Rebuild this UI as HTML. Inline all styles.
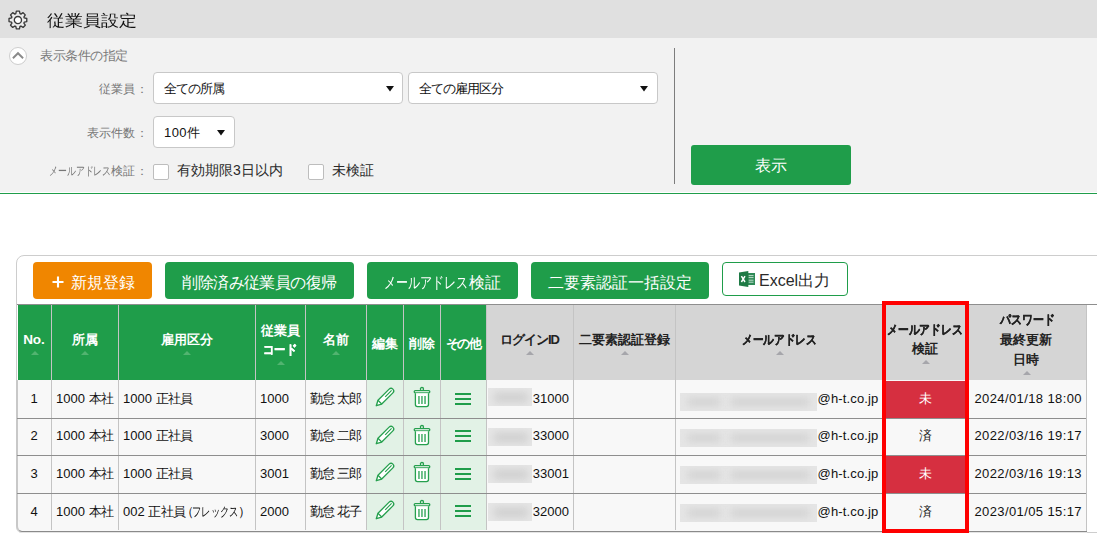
<!DOCTYPE html><html><head><meta charset="utf-8"><style>
*{box-sizing:border-box;margin:0;padding:0}
html,body{width:1097px;height:543px;overflow:hidden;background:#fff}
body{position:relative;font-family:"Liberation Sans",sans-serif;color:#222}
.a{position:absolute}
.t{position:absolute;white-space:nowrap;line-height:1}
</style></head><body>
<div class="a" style="left:0;top:0;width:1097px;height:38px;background:#e0e0e0"></div>
<svg class="a" style="left:8px;top:10px" width="20" height="20" viewBox="0 0 20 20"><path fill="#ebebeb" stroke="#3a3a3a" stroke-width="1.35" stroke-linejoin="round" d="M7.80 3.69 L8.35 1.18 L11.45 1.18 L12.00 3.69 L12.91 4.07 L15.07 2.69 L17.26 4.88 L15.88 7.04 L16.26 7.95 L18.77 8.50 L18.77 11.60 L16.26 12.15 L15.88 13.06 L17.26 15.22 L15.07 17.41 L12.91 16.03 L12.00 16.41 L11.45 18.92 L8.35 18.92 L7.80 16.41 L6.89 16.03 L4.73 17.41 L2.54 15.22 L3.92 13.06 L3.54 12.15 L1.03 11.60 L1.03 8.50 L3.54 7.95 L3.92 7.04 L2.54 4.88 L4.73 2.69 L6.89 4.07Z"/><circle cx="9.9" cy="10.05" r="3.6" fill="#fff" stroke="#3a3a3a" stroke-width="1.35"/></svg>
<div class="t" style="left:47px;top:11px;font-size:18px;color:#111;transform:scaleY(0.89);transform-origin:0 17px">従業員設定</div>
<div class="a" style="left:0;top:38px;width:1097px;height:154px;background:#f2f2f2"></div>
<div class="a" style="left:0;top:193px;width:1097px;height:1px;background:#1f9d4a"></div>
<svg class="a" style="left:9px;top:47px" width="18" height="18" viewBox="0 0 18 18"><circle cx="9" cy="9" r="8.5" fill="#fff" stroke="#cdcdcd"/><path d="M3.9 11.2L9 6.2l5.1 5" fill="none" stroke="#8a8a8a" stroke-width="1.9"/></svg>
<div class="t" style="left:40px;top:48.5px;font-size:13px;color:#7a7a7a;letter-spacing:-0.5px">表示条件の指定</div>
<div class="t" style="left:99px;top:83px;font-size:12px;color:#777">従業員<span style="margin-left:1px">：</span></div>
<div class="t" style="left:87px;top:127px;font-size:12px;color:#777">表示件数<span style="margin-left:1px">：</span></div>
<div class="t" style="left:48.5px;top:164.5px;font-size:12px;color:#777"><span style="display:inline-block;width:62.16px;margin-left:0px"><span style="display:inline-block;transform:scaleX(0.74);transform-origin:0 0;-webkit-text-stroke:0px currentColor">メールアドレス</span></span>検証<span style="margin-left:1px">：</span></div>
<div class="a" style="left:153px;top:72px;width:250px;height:32px;background:#fff;border:1px solid #c8c8c8;border-radius:4px"></div><div class="t" style="left:164px;top:82px;font-size:13px;color:#111;letter-spacing:-1px">全ての所属</div><svg class="a" style="left:385.5px;top:86px" width="8" height="6" viewBox="0 0 8 6"><path d="M0 0h8L4 5.5z" fill="#111"/></svg>
<div class="a" style="left:408px;top:72px;width:250px;height:32px;background:#fff;border:1px solid #c8c8c8;border-radius:4px"></div><div class="t" style="left:419px;top:82px;font-size:13px;color:#111;letter-spacing:-1px">全ての雇用区分</div><svg class="a" style="left:639.5px;top:86px" width="8" height="6" viewBox="0 0 8 6"><path d="M0 0h8L4 5.5z" fill="#111"/></svg>
<div class="a" style="left:153px;top:116px;width:82px;height:32px;background:#fff;border:1px solid #c8c8c8;border-radius:4px"></div><div class="t" style="left:164px;top:126px;font-size:13px;color:#111;letter-spacing:0.4px">100件</div><svg class="a" style="left:216.5px;top:130px" width="8" height="6" viewBox="0 0 8 6"><path d="M0 0h8L4 5.5z" fill="#111"/></svg>
<div class="a" style="left:153px;top:164px;width:16px;height:16px;background:#fff;border:1px solid #bdbdbd;border-radius:2px"></div>
<div class="t" style="left:177px;top:162.5px;font-size:14px;color:#2a2a2a">有効期限3日以内</div>
<div class="a" style="left:308px;top:164px;width:16px;height:16px;background:#fff;border:1px solid #bdbdbd;border-radius:2px"></div>
<div class="t" style="left:332px;top:162.5px;font-size:14px;color:#2a2a2a">未検証</div>
<div class="a" style="left:674px;top:48px;width:1px;height:136px;background:#7d7d7d"></div>
<div class="a" style="left:691px;top:145px;width:160px;height:40px;background:#1f9d4a;border-radius:3px"></div>
<div class="t" style="left:691px;top:158px;width:160px;text-align:center;font-size:16px;color:#fff">表示</div>
<div class="a" style="left:16px;top:255px;width:1100px;height:278px;border:1px solid #cdcdcd;border-radius:8px 8px 6px 6px;background:#fff"></div>
<div class="a" style="left:33px;top:262px;width:119px;height:37px;background:#f08600;border-radius:4px"></div>
<svg class="a" style="left:52px;top:276px" width="12" height="12" viewBox="0 0 12 12"><path d="M6 0.5v11M0.5 6h11" stroke="#fff" stroke-width="2.1"/></svg>
<div class="t" style="left:71px;top:275px;font-size:16px;color:#fff">新規登録</div>
<div class="a" style="left:165px;top:262px;width:189px;height:37px;background:#1f9d4a;border-radius:4px"></div><div class="t" style="left:165px;top:274.5px;width:189px;text-align:center;font-size:16px;color:#fff;letter-spacing:-0.6px">削除済み従業員の復帰</div>
<div class="a" style="left:367px;top:262px;width:151px;height:37px;background:#1f9d4a;border-radius:4px"></div><div class="t" style="left:367px;top:274.5px;width:151px;text-align:center;font-size:16px;color:#fff;letter-spacing:0px"><span style="display:inline-block;width:85.00px;margin-left:0px"><span style="display:inline-block;transform:scaleX(0.75);transform-origin:0 0;-webkit-text-stroke:0px currentColor">メールアドレス</span></span>検証</div>
<div class="a" style="left:531px;top:262px;width:178px;height:37px;background:#1f9d4a;border-radius:4px"></div><div class="t" style="left:531px;top:274.5px;width:178px;text-align:center;font-size:16px;color:#fff;letter-spacing:0px">二要素認証一括設定</div>
<div class="a" style="left:722px;top:262px;width:126px;height:34px;background:#fff;border:1px solid #1f9d4a;border-radius:4px"></div>
<svg class="a" style="left:738px;top:270px" width="18" height="18" viewBox="0 0 18 18"><rect x="9.5" y="3" width="7.5" height="12" fill="#2f8a57"/><path d="M10.5 5.6h5M10.5 7.6h5M10.5 10.2h5M10.5 12.2h5" stroke="#cfe6d8" stroke-width="0.9"/><path d="M1 2.6L10.3 1v16L1 15.4z" fill="#1e7a45"/><path d="M3.4 6.2l3.6 5.8M7 6.2l-3.6 5.8" stroke="#fff" stroke-width="1.5"/></svg>
<div class="t" style="left:759px;top:272.5px;font-size:16px;color:#2a2a2a">Excel出力</div>
<div class="a" style="left:17px;top:304px;width:1080px;height:1px;background:#8e8e8e"></div>
<div class="a" style="left:18px;top:305px;width:468px;height:75px;background:#1f9d4a"></div>
<div class="a" style="left:486px;top:305px;width:600px;height:75px;background:#d5d5d5"></div>
<div class="a" style="left:16px;top:380px;width:1071px;height:152px;background:#f8f8f8;border-left:2px solid #c8c8c8;border-bottom:1px solid #8a8a8a;border-bottom-left-radius:6px;box-shadow:0 1px 0 #e4e4e4"></div>
<div class="a" style="left:366px;top:380px;width:120px;height:150px;background:#e2f2e6"></div>
<div class="a" style="left:884px;top:381px;width:82px;height:37px;background:#d62f40"></div>
<div class="a" style="left:884px;top:456px;width:82px;height:37px;background:#d62f40"></div>
<div class="a" style="left:51px;top:305px;width:1px;height:225px;background:#c4c4c4"></div>
<div class="a" style="left:118px;top:305px;width:1px;height:225px;background:#c4c4c4"></div>
<div class="a" style="left:255px;top:305px;width:1px;height:225px;background:#c4c4c4"></div>
<div class="a" style="left:305px;top:305px;width:1px;height:225px;background:#c4c4c4"></div>
<div class="a" style="left:366px;top:305px;width:1px;height:225px;background:#c4c4c4"></div>
<div class="a" style="left:403px;top:305px;width:1px;height:225px;background:#c4c4c4"></div>
<div class="a" style="left:440px;top:305px;width:1px;height:225px;background:#c4c4c4"></div>
<div class="a" style="left:486px;top:305px;width:1px;height:225px;background:#c4c4c4"></div>
<div class="a" style="left:573px;top:305px;width:1px;height:225px;background:#c4c4c4"></div>
<div class="a" style="left:675px;top:305px;width:1px;height:225px;background:#c4c4c4"></div>
<div class="a" style="left:884px;top:305px;width:1px;height:225px;background:#c4c4c4"></div>
<div class="a" style="left:966px;top:305px;width:1px;height:225px;background:#c4c4c4"></div>
<div class="a" style="left:1086px;top:305px;width:1px;height:226px;background:#c4c4c4"></div>
<div class="a" style="left:17px;top:418px;width:1069px;height:1px;background:#8e8e8e"></div>
<div class="a" style="left:17px;top:455px;width:1069px;height:1px;background:#8e8e8e"></div>
<div class="a" style="left:17px;top:493px;width:1069px;height:1px;background:#8e8e8e"></div>
<div class="t" style="left:17px;width:34px;top:333.2px;text-align:center;font-size:13.5px;font-weight:bold;color:#fff;letter-spacing:0px">No.</div><svg class="a" style="left:30.5px;top:350.8px" width="8" height="4" viewBox="0 0 8 4"><path d="M0 4L4 0 8 4z" fill="#52b470"/></svg>
<div class="t" style="left:51px;width:67px;top:333.2px;text-align:center;font-size:13px;font-weight:bold;color:#fff;letter-spacing:0px">所属</div><svg class="a" style="left:81.0px;top:350.8px" width="8" height="4" viewBox="0 0 8 4"><path d="M0 4L4 0 8 4z" fill="#52b470"/></svg>
<div class="t" style="left:118px;width:137px;top:333.2px;text-align:center;font-size:13px;font-weight:bold;color:#fff;letter-spacing:0px">雇用区分</div><svg class="a" style="left:183.0px;top:350.8px" width="8" height="4" viewBox="0 0 8 4"><path d="M0 4L4 0 8 4z" fill="#52b470"/></svg>
<div class="t" style="left:255px;width:50px;top:323.5px;text-align:center;font-size:13px;font-weight:bold;color:#fff;letter-spacing:0px">従業員</div><div class="t" style="left:255px;width:50px;top:343.0px;text-align:center;font-size:13px;font-weight:bold;color:#fff;letter-spacing:0px"><span style="display:inline-block;width:33.93px;margin-left:0px"><span style="display:inline-block;transform:scaleX(0.87);transform-origin:0 0;-webkit-text-stroke:0.35px currentColor">コード</span></span></div><svg class="a" style="left:276.5px;top:360.5px" width="8" height="4" viewBox="0 0 8 4"><path d="M0 4L4 0 8 4z" fill="#52b470"/></svg>
<div class="t" style="left:305px;width:61px;top:333.2px;text-align:center;font-size:13px;font-weight:bold;color:#fff;letter-spacing:0px">名前</div><svg class="a" style="left:332.0px;top:350.8px" width="8" height="4" viewBox="0 0 8 4"><path d="M0 4L4 0 8 4z" fill="#52b470"/></svg>
<div class="t" style="left:366px;width:37px;top:337.2px;text-align:center;font-size:13px;font-weight:bold;color:#fff;letter-spacing:0px">編集</div>
<div class="t" style="left:403px;width:37px;top:337.2px;text-align:center;font-size:13px;font-weight:bold;color:#fff;letter-spacing:0px">削除</div>
<div class="t" style="left:440px;width:46px;top:337.2px;text-align:center;font-size:13px;font-weight:bold;color:#fff;letter-spacing:-1.6px">その他</div>
<div class="t" style="left:486px;width:87px;top:333.2px;text-align:center;font-size:13px;font-weight:bold;color:#222;letter-spacing:-1px">ログインID</div><svg class="a" style="left:526.0px;top:350.8px" width="8" height="4" viewBox="0 0 8 4"><path d="M0 4L4 0 8 4z" fill="#a6a6ab"/></svg>
<div class="t" style="left:573px;width:102px;top:333.2px;text-align:center;font-size:13px;font-weight:bold;color:#222;letter-spacing:0px">二要素認証登録</div><svg class="a" style="left:620.5px;top:350.8px" width="8" height="4" viewBox="0 0 8 4"><path d="M0 4L4 0 8 4z" fill="#a6a6ab"/></svg>
<div class="t" style="left:675px;width:209px;top:333.2px;text-align:center;font-size:13px;font-weight:bold;color:#222;letter-spacing:0px"><span style="display:inline-block;width:74.62px;margin-left:0px"><span style="display:inline-block;transform:scaleX(0.82);transform-origin:0 0;-webkit-text-stroke:0.35px currentColor">メールアドレス</span></span></div><svg class="a" style="left:776.0px;top:350.8px" width="8" height="4" viewBox="0 0 8 4"><path d="M0 4L4 0 8 4z" fill="#a6a6ab"/></svg>
<div class="t" style="left:884px;width:82px;top:322.5px;text-align:center;font-size:13px;font-weight:bold;color:#222;letter-spacing:0px"><span style="display:inline-block;width:75.53px;margin-left:0px"><span style="display:inline-block;transform:scaleX(0.83);transform-origin:0 0;-webkit-text-stroke:0.35px currentColor">メールアドレス</span></span></div><div class="t" style="left:884px;width:82px;top:342.0px;text-align:center;font-size:13px;font-weight:bold;color:#222;letter-spacing:0px">検証</div><svg class="a" style="left:921.5px;top:359.5px" width="8" height="4" viewBox="0 0 8 4"><path d="M0 4L4 0 8 4z" fill="#a6a6ab"/></svg>
<div class="t" style="left:966px;width:120px;top:313.0px;text-align:center;font-size:13px;font-weight:bold;color:#222;letter-spacing:0px"><span style="display:inline-block;width:54.60px;margin-left:3px"><span style="display:inline-block;transform:scaleX(0.84);transform-origin:0 0;-webkit-text-stroke:0.35px currentColor">パスワード</span></span></div><div class="t" style="left:966px;width:120px;top:333.0px;text-align:center;font-size:13px;font-weight:bold;color:#222;letter-spacing:0px">最終更新</div><div class="t" style="left:966px;width:120px;top:353.0px;text-align:center;font-size:13px;font-weight:bold;color:#222;letter-spacing:0px">日時</div><svg class="a" style="left:1022.5px;top:371.0px" width="8" height="4" viewBox="0 0 8 4"><path d="M0 4L4 0 8 4z" fill="#a6a6ab"/></svg>
<div class="t" style="left:17px;width:34px;top:391.7px;text-align:center;font-size:13px;color:#111;letter-spacing:0px">1</div>
<div class="t" style="left:56px;top:391.7px;font-size:13px;color:#111;letter-spacing:0px">1000 <span style="letter-spacing:-0.4px">本社</span></div>
<div class="t" style="left:123px;top:391.7px;font-size:13px;color:#111;letter-spacing:0px">1000 <span style="letter-spacing:-0.6px">正社員</span></div>
<div class="t" style="left:260px;top:391.7px;font-size:13px;color:#111;letter-spacing:0px">1000</div>
<div class="t" style="left:310px;top:391.7px;font-size:13px;color:#111;letter-spacing:-0.8px">勤怠 太郎</div>
<svg class="a" style="left:372px;top:384px" width="26" height="26" viewBox="0 0 26 26"><path d="M5.98 16.28L17.13 5.13A2.65 2.65 0 0 1 20.88 8.88L9.73 20.03L4.3 21.7Z" fill="#fff" stroke="#26a04e" stroke-width="1.35" stroke-linejoin="round"/><path d="M5.98 16.28L9.73 20.03M13.2 12.8L19.6 6.4" fill="none" stroke="#26a04e" stroke-width="1.2"/></svg>
<svg class="a" style="left:409px;top:384px" width="26" height="26" viewBox="0 0 26 26"><circle cx="12.95" cy="5.05" r="1.55" fill="#fff" stroke="#26a04e" stroke-width="1.3"/><rect x="5.2" y="6.65" width="15.6" height="2.3" rx="1.1" fill="#fff" stroke="#26a04e" stroke-width="1.3"/><path d="M6.4 9.3V20.6a2.1 2.1 0 0 0 2.1 2.1h8.9a2.1 2.1 0 0 0 2.1-2.1V9.3" fill="#fff" stroke="#26a04e" stroke-width="1.3"/><path d="M9.95 12v7.9M12.95 12v7.9M16.05 12v7.9" stroke="#62bb80" stroke-width="1.8"/></svg>
<svg class="a" style="left:455px;top:392px" width="16" height="14" viewBox="0 0 16 14"><path d="M0 2h16M0 7h16M0 12h16" stroke="#1f9d4a" stroke-width="2"/></svg>
<div class="a" style="left:488px;top:388px;width:44px;height:18px;background:#e6e6e6;overflow:hidden"><div class="a" style="left:6px;top:5px;width:34px;height:9px;background:#cdcdcd;filter:blur(4px)"></div></div>
<div class="t" style="right:528px;top:391.7px;text-align:right;font-size:13px;color:#111;letter-spacing:0px">31000</div>
<div class="a" style="left:680px;top:393px;width:137px;height:18px;background:#e5e5e5;overflow:hidden"><div class="a" style="left:8px;top:5px;width:32px;height:8px;background:#d3d3d3;filter:blur(3.5px)"></div><div class="a" style="left:51px;top:5px;width:78px;height:8px;background:#d3d3d3;filter:blur(3.5px)"></div></div>
<div class="t" style="right:218.5px;top:391.7px;text-align:right;font-size:13px;color:#111;letter-spacing:0.15px">@h-t.co.jp</div>
<div class="t" style="left:884px;width:82px;top:391.7px;text-align:center;font-size:13px;color:#fff;letter-spacing:0px">未</div>
<div class="t" style="right:15px;top:391.7px;text-align:right;font-size:13px;color:#111;letter-spacing:0.4px">2024/01/18 18:00</div>
<div class="t" style="left:17px;width:34px;top:429.2px;text-align:center;font-size:13px;color:#111;letter-spacing:0px">2</div>
<div class="t" style="left:56px;top:429.2px;font-size:13px;color:#111;letter-spacing:0px">1000 <span style="letter-spacing:-0.4px">本社</span></div>
<div class="t" style="left:123px;top:429.2px;font-size:13px;color:#111;letter-spacing:0px">1000 <span style="letter-spacing:-0.6px">正社員</span></div>
<div class="t" style="left:260px;top:429.2px;font-size:13px;color:#111;letter-spacing:0px">3000</div>
<div class="t" style="left:310px;top:429.2px;font-size:13px;color:#111;letter-spacing:-0.8px">勤怠 二郎</div>
<svg class="a" style="left:372px;top:422px" width="26" height="26" viewBox="0 0 26 26"><path d="M5.98 16.28L17.13 5.13A2.65 2.65 0 0 1 20.88 8.88L9.73 20.03L4.3 21.7Z" fill="#fff" stroke="#26a04e" stroke-width="1.35" stroke-linejoin="round"/><path d="M5.98 16.28L9.73 20.03M13.2 12.8L19.6 6.4" fill="none" stroke="#26a04e" stroke-width="1.2"/></svg>
<svg class="a" style="left:409px;top:422px" width="26" height="26" viewBox="0 0 26 26"><circle cx="12.95" cy="5.05" r="1.55" fill="#fff" stroke="#26a04e" stroke-width="1.3"/><rect x="5.2" y="6.65" width="15.6" height="2.3" rx="1.1" fill="#fff" stroke="#26a04e" stroke-width="1.3"/><path d="M6.4 9.3V20.6a2.1 2.1 0 0 0 2.1 2.1h8.9a2.1 2.1 0 0 0 2.1-2.1V9.3" fill="#fff" stroke="#26a04e" stroke-width="1.3"/><path d="M9.95 12v7.9M12.95 12v7.9M16.05 12v7.9" stroke="#62bb80" stroke-width="1.8"/></svg>
<svg class="a" style="left:455px;top:429px" width="16" height="14" viewBox="0 0 16 14"><path d="M0 2h16M0 7h16M0 12h16" stroke="#1f9d4a" stroke-width="2"/></svg>
<div class="a" style="left:488px;top:428px;width:44px;height:18px;background:#e6e6e6;overflow:hidden"><div class="a" style="left:6px;top:5px;width:34px;height:9px;background:#cdcdcd;filter:blur(4px)"></div></div>
<div class="t" style="right:528px;top:429.2px;text-align:right;font-size:13px;color:#111;letter-spacing:0px">33000</div>
<div class="a" style="left:680px;top:429px;width:137px;height:18px;background:#e5e5e5;overflow:hidden"><div class="a" style="left:8px;top:5px;width:32px;height:8px;background:#d3d3d3;filter:blur(3.5px)"></div><div class="a" style="left:51px;top:5px;width:78px;height:8px;background:#d3d3d3;filter:blur(3.5px)"></div></div>
<div class="t" style="right:218.5px;top:429.2px;text-align:right;font-size:13px;color:#111;letter-spacing:0.15px">@h-t.co.jp</div>
<div class="t" style="left:884px;width:82px;top:429.2px;text-align:center;font-size:13px;color:#222;letter-spacing:0px">済</div>
<div class="t" style="right:15px;top:429.2px;text-align:right;font-size:13px;color:#111;letter-spacing:0.4px">2022/03/16 19:17</div>
<div class="t" style="left:17px;width:34px;top:467.4px;text-align:center;font-size:13px;color:#111;letter-spacing:0px">3</div>
<div class="t" style="left:56px;top:467.4px;font-size:13px;color:#111;letter-spacing:0px">1000 <span style="letter-spacing:-0.4px">本社</span></div>
<div class="t" style="left:123px;top:467.4px;font-size:13px;color:#111;letter-spacing:0px">1000 <span style="letter-spacing:-0.6px">正社員</span></div>
<div class="t" style="left:260px;top:467.4px;font-size:13px;color:#111;letter-spacing:0px">3001</div>
<div class="t" style="left:310px;top:467.4px;font-size:13px;color:#111;letter-spacing:-0.8px">勤怠 三郎</div>
<svg class="a" style="left:372px;top:459px" width="26" height="26" viewBox="0 0 26 26"><path d="M5.98 16.28L17.13 5.13A2.65 2.65 0 0 1 20.88 8.88L9.73 20.03L4.3 21.7Z" fill="#fff" stroke="#26a04e" stroke-width="1.35" stroke-linejoin="round"/><path d="M5.98 16.28L9.73 20.03M13.2 12.8L19.6 6.4" fill="none" stroke="#26a04e" stroke-width="1.2"/></svg>
<svg class="a" style="left:409px;top:459px" width="26" height="26" viewBox="0 0 26 26"><circle cx="12.95" cy="5.05" r="1.55" fill="#fff" stroke="#26a04e" stroke-width="1.3"/><rect x="5.2" y="6.65" width="15.6" height="2.3" rx="1.1" fill="#fff" stroke="#26a04e" stroke-width="1.3"/><path d="M6.4 9.3V20.6a2.1 2.1 0 0 0 2.1 2.1h8.9a2.1 2.1 0 0 0 2.1-2.1V9.3" fill="#fff" stroke="#26a04e" stroke-width="1.3"/><path d="M9.95 12v7.9M12.95 12v7.9M16.05 12v7.9" stroke="#62bb80" stroke-width="1.8"/></svg>
<svg class="a" style="left:455px;top:467px" width="16" height="14" viewBox="0 0 16 14"><path d="M0 2h16M0 7h16M0 12h16" stroke="#1f9d4a" stroke-width="2"/></svg>
<div class="a" style="left:488px;top:465px;width:44px;height:18px;background:#e6e6e6;overflow:hidden"><div class="a" style="left:6px;top:5px;width:34px;height:9px;background:#cdcdcd;filter:blur(4px)"></div></div>
<div class="t" style="right:528px;top:467.4px;text-align:right;font-size:13px;color:#111;letter-spacing:0px">33001</div>
<div class="a" style="left:680px;top:465.5px;width:137px;height:18px;background:#e5e5e5;overflow:hidden"><div class="a" style="left:8px;top:5px;width:32px;height:8px;background:#d3d3d3;filter:blur(3.5px)"></div><div class="a" style="left:51px;top:5px;width:78px;height:8px;background:#d3d3d3;filter:blur(3.5px)"></div></div>
<div class="t" style="right:218.5px;top:467.4px;text-align:right;font-size:13px;color:#111;letter-spacing:0.15px">@h-t.co.jp</div>
<div class="t" style="left:884px;width:82px;top:467.4px;text-align:center;font-size:13px;color:#fff;letter-spacing:0px">未</div>
<div class="t" style="right:15px;top:467.4px;text-align:right;font-size:13px;color:#111;letter-spacing:0.4px">2022/03/16 19:13</div>
<div class="t" style="left:17px;width:34px;top:504.9px;text-align:center;font-size:13px;color:#111;letter-spacing:0px">4</div>
<div class="t" style="left:56px;top:504.9px;font-size:13px;color:#111;letter-spacing:0px">1000 <span style="letter-spacing:-0.4px">本社</span></div>
<div class="t" style="left:123px;top:504.9px;font-size:13px;color:#111;letter-spacing:0px">002 <span style="letter-spacing:-0.6px">正社員</span><span style="margin-left:-5px;letter-spacing:-2px">（</span><span style="display:inline-block;width:46.80px;margin-left:0px"><span style="display:inline-block;transform:scaleX(0.72);transform-origin:0 0;-webkit-text-stroke:0px currentColor">フレックス</span></span><span style="margin-left:0px">）</span></div>
<div class="t" style="left:260px;top:504.9px;font-size:13px;color:#111;letter-spacing:0px">2000</div>
<div class="t" style="left:310px;top:504.9px;font-size:13px;color:#111;letter-spacing:-0.8px">勤怠 花子</div>
<svg class="a" style="left:372px;top:497px" width="26" height="26" viewBox="0 0 26 26"><path d="M5.98 16.28L17.13 5.13A2.65 2.65 0 0 1 20.88 8.88L9.73 20.03L4.3 21.7Z" fill="#fff" stroke="#26a04e" stroke-width="1.35" stroke-linejoin="round"/><path d="M5.98 16.28L9.73 20.03M13.2 12.8L19.6 6.4" fill="none" stroke="#26a04e" stroke-width="1.2"/></svg>
<svg class="a" style="left:409px;top:497px" width="26" height="26" viewBox="0 0 26 26"><circle cx="12.95" cy="5.05" r="1.55" fill="#fff" stroke="#26a04e" stroke-width="1.3"/><rect x="5.2" y="6.65" width="15.6" height="2.3" rx="1.1" fill="#fff" stroke="#26a04e" stroke-width="1.3"/><path d="M6.4 9.3V20.6a2.1 2.1 0 0 0 2.1 2.1h8.9a2.1 2.1 0 0 0 2.1-2.1V9.3" fill="#fff" stroke="#26a04e" stroke-width="1.3"/><path d="M9.95 12v7.9M12.95 12v7.9M16.05 12v7.9" stroke="#62bb80" stroke-width="1.8"/></svg>
<svg class="a" style="left:455px;top:504px" width="16" height="14" viewBox="0 0 16 14"><path d="M0 2h16M0 7h16M0 12h16" stroke="#1f9d4a" stroke-width="2"/></svg>
<div class="a" style="left:488px;top:503px;width:44px;height:18px;background:#e6e6e6;overflow:hidden"><div class="a" style="left:6px;top:5px;width:34px;height:9px;background:#cdcdcd;filter:blur(4px)"></div></div>
<div class="t" style="right:528px;top:504.9px;text-align:right;font-size:13px;color:#111;letter-spacing:0px">32000</div>
<div class="a" style="left:680px;top:503.5px;width:137px;height:18px;background:#e5e5e5;overflow:hidden"><div class="a" style="left:8px;top:5px;width:32px;height:8px;background:#d3d3d3;filter:blur(3.5px)"></div><div class="a" style="left:51px;top:5px;width:78px;height:8px;background:#d3d3d3;filter:blur(3.5px)"></div></div>
<div class="t" style="right:218.5px;top:504.9px;text-align:right;font-size:13px;color:#111;letter-spacing:0.15px">@h-t.co.jp</div>
<div class="t" style="left:884px;width:82px;top:504.9px;text-align:center;font-size:13px;color:#222;letter-spacing:0px">済</div>
<div class="t" style="right:15px;top:504.9px;text-align:right;font-size:13px;color:#111;letter-spacing:0.4px">2023/01/05 15:17</div>
<div class="a" style="left:881.5px;top:300.5px;width:87.2px;height:232.3px;border:4.3px solid #fe0000"></div>
</body></html>
